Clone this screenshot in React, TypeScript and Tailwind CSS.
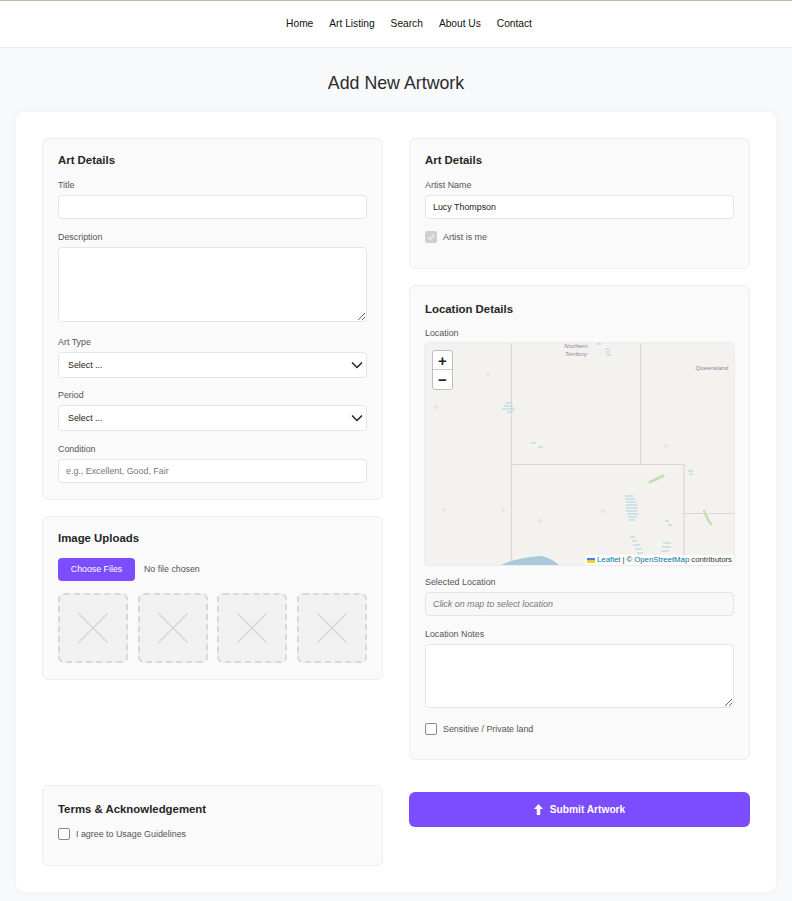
const navLinks = ["Home", "Art Listing", "Search", "About Us", "Contact"];
const panelClass = "rounded-md border border-[#eeeeee] bg-[#fafafa] px-[15px]";
const headingClass = "text-[11.4px] leading-[14px] font-bold text-[#262626]";
const labelClass = "mb-[5px] block text-[8.9px] leading-[10px] text-[#555555]";
const inputClass =
  "block h-6 w-full rounded border border-[#e6e6e6] px-[7px] text-[8.9px] font-medium text-[#222222] outline-none placeholder:font-normal placeholder:text-[#777777]";
const textareaClass = "block w-full rounded border border-[#e6e6e6] bg-white outline-none";

function SelectField({ label, className }: { label: string; className: string }) {
  return (
    <div className={className}>
      <label className={labelClass}>{label}</label>
      <div className="relative">
        <select className="block h-[26px] w-full appearance-none rounded border border-[#e6e6e6] bg-white pt-px pl-[9px] text-[8.9px] font-medium text-[#222222] outline-none">
          <option>Select ...</option>
        </select>
        <svg
          className="absolute top-[9px] right-[4px] h-[8px] w-[12px]"
          viewBox="0 0 12 8"
          fill="none"
          stroke="#222222"
          strokeWidth="1.5"
        >
          <path d="M1 1.5 6 6.5 11 1.5" />
        </svg>
      </div>
    </div>
  );
}

function Checkbox({ label, checked }: { label: string; checked?: boolean }) {
  return (
    <label className="flex items-center gap-[6px] text-[8.9px] leading-3 text-[#555555]">
      {checked ? (
        <span className="flex h-3 w-3 items-center justify-center rounded-[2px] bg-[#cfcfcf]">
          <svg className="h-2 w-2" viewBox="0 0 8 8" fill="none" stroke="#ececec" strokeWidth="1.5">
            <path d="M1 4.2 3.2 6.4 7 1.5" />
          </svg>
        </span>
      ) : (
        <span className="h-3 w-3 rounded-[2px] border border-[#8a8a8a] bg-white" />
      )}
      {label}
    </label>
  );
}

function ImageSlot() {
  return (
    <div className="flex aspect-square items-center justify-center rounded-md border-2 border-dashed border-[#d8d8d8] bg-[#f1f1f1]">
      <svg className="h-[30px] w-[30px]" viewBox="0 0 30 30" stroke="#cfcfcf" strokeWidth="1.1">
        <path d="M0 0 30 30M30 0 0 30" />
      </svg>
    </div>
  );
}

function MapDrawing() {
  return (
    <svg className="block h-full w-full" viewBox="0 0 309 222">
      <g fill="none" stroke="#ddd5d2" strokeWidth="1.2">
        <path d="M86.5 0V222M215.5 0V122M86.5 121.5H259M259 122V222M259 170.5H309" />
      </g>
      <path d="M76 222C88 216 104 214 117 213C124 215 130 218 134 222Z" fill="#a9c8da" />
      <g stroke="#a9d3de" strokeWidth="1">
        <path d="M77 66H90M79 63H88M81 60H86M82 69H88" />
        <path d="M172 1H176M180 6H184M181 9H185M181 12H186" />
        <path d="M200 153H208M200 156H210M201 159H211M201 162H212M201 165H213M201 168H212M202 171H214M203 174H212M204 177H210" />
        <path d="M205 194H210M207 198H213M208 202H215M210 206H217M212 210H218" />
        <path d="M238 200H246M237 204H246M236 208H244" />
        <path d="M263 128H268M264 131H268M240 178H244M243 182H247" />
        <path d="M106 100H111M113 104H118" />
      </g>
      <g stroke="#c3dfb6" strokeWidth="3" strokeLinecap="round" fill="none">
        <path d="M225 139 238 133" />
        <path d="M279 168C281 172 282 176 286 181" strokeWidth="2.5" />
      </g>
      <g fill="#e9e6df">
        <circle cx="63" cy="31" r="2" />
        <circle cx="11" cy="64" r="2" />
        <circle cx="19" cy="167" r="2" />
        <circle cx="78" cy="167" r="2" />
        <circle cx="115" cy="178" r="2" />
        <circle cx="241" cy="103" r="2" />
        <circle cx="178" cy="168" r="2" />
      </g>
      <g fill="#8f7f9d" fontSize="6" fontStyle="italic" textAnchor="middle" fontFamily="Liberation Sans, sans-serif">
        <text x="151" y="5">Northern</text>
        <text x="151" y="13">Territory</text>
        <text x="287" y="27">Queensland</text>
      </g>
    </svg>
  );
}

export default function App() {
  return (
    <div className="min-h-[901px] border-t border-t-[#c9b8a8] bg-[#f8f9fb] font-['Liberation_Sans',Arial,sans-serif]">
      {/* Nav */}
      <nav className="flex h-[47px] items-center justify-center gap-4 border-b border-[#e6e7ea] bg-white pb-px pl-[26px] text-[10.2px] text-[#111111]">
        {navLinks.map((link) => (
          <a key={link} href="#">
            {link}
          </a>
        ))}
      </nav>

      <h1 className="flex h-16 items-center justify-center pt-[6px] text-[17.8px] font-normal text-[#2b2b2b]">
        Add New Artwork
      </h1>

      <main className="mx-4 mb-[10px] grid grid-cols-2 gap-x-[26px] gap-y-[25px] rounded-lg bg-white p-[26px] shadow-[0_0_6px_rgba(0,0,0,0.05)]">
        {/* Left column */}
        <div className="flex flex-col gap-[16px]">
          <section className={`${panelClass} pt-[14px] pb-[16px]`}>
            <h2 className={headingClass}>Art Details</h2>
            <div className="mt-[13px]">
              <label className={labelClass}>Title</label>
              <input className={`${inputClass} bg-white`} />
            </div>
            <div className="mt-[13px]">
              <label className={labelClass}>Description</label>
              <textarea className={`${textareaClass} h-[75px]`} />
            </div>
            <SelectField label="Art Type" className="mt-[15px]" />
            <SelectField label="Period" className="mt-[12px]" />
            <div className="mt-[13px]">
              <label className={labelClass}>Condition</label>
              <input className={`${inputClass} bg-white`} placeholder="e.g., Excellent, Good, Fair" />
            </div>
          </section>

          <section className={`${panelClass} pt-[14px] pb-[16px]`}>
            <h2 className={headingClass}>Image Uploads</h2>
            <input
              type="file"
              multiple
              className="mt-[13px] block h-[23px] w-full text-[8.8px] text-[#555555] file:mr-[9px] file:h-[23px] file:w-[77px] file:cursor-pointer file:rounded file:border-0 file:bg-[#7c4dff] file:text-[8.8px] file:font-medium file:text-white"
            />
            <div className="mt-3 grid grid-cols-4 gap-[9.5px]">
              <ImageSlot />
              <ImageSlot />
              <ImageSlot />
              <ImageSlot />
            </div>
          </section>
        </div>

        {/* Right column */}
        <div className="flex flex-col gap-[16px]">
          <section className={`${panelClass} pt-[14px] pb-[25px]`}>
            <h2 className={headingClass}>Art Details</h2>
            <div className="mt-[13px]">
              <label className={labelClass}>Artist Name</label>
              <input className={`${inputClass} bg-white`} defaultValue="Lucy Thompson" />
            </div>
            <div className="mt-3">
              <Checkbox label="Artist is me" checked />
            </div>
          </section>

          <section className={`${panelClass} pt-[16px] pb-[24px]`}>
            <h2 className={headingClass}>Location Details</h2>
            <div className="mt-[12px]">
              <label className={labelClass}>Location</label>
              <div className="relative h-[222px] overflow-hidden rounded bg-[#f4f2ee] ring-1 ring-[#ececec]">
                <MapDrawing />
                <div className="absolute top-[7px] left-[7px] w-[21px] rounded-[3px] border border-[#bdbdbd] bg-white text-center text-[15px] leading-[19px] font-bold text-[#222222]">
                  <div className="h-[19px] border-b border-[#cccccc]">+</div>
                  <div className="h-[19px]">−</div>
                </div>
                <div className="absolute right-0 bottom-0 flex h-[10px] items-center gap-[2px] bg-white/85 px-[2px] text-[7.8px] text-[#333333]">
                  <svg className="h-[5px] w-[8px]" viewBox="0 0 8 5">
                    <path d="M0 0H8V2.5H0Z" fill="#4c7be1" />
                    <path d="M0 2.5H8V5H0Z" fill="#ffd500" />
                  </svg>
                  <span className="text-[#0078a8]">Leaflet</span>
                  <span>|</span>
                  <span>©</span>
                  <span className="text-[#0078a8]">OpenStreetMap</span>
                  <span>contributors</span>
                </div>
              </div>
            </div>
            <div className="mt-[12px]">
              <label className={labelClass}>Selected Location</label>
              <input
                readOnly
                className={`${inputClass} bg-[#f8f8f8] italic placeholder:italic`}
                placeholder="Click on map to select location"
              />
            </div>
            <div className="mt-[13px]">
              <label className={labelClass}>Location Notes</label>
              <textarea className={`${textareaClass} h-16`} />
            </div>
            <div className="mt-[15px]">
              <Checkbox label="Sensitive / Private land" />
            </div>
          </section>
        </div>

        {/* Bottom row */}
        <section className={`${panelClass} pt-[16px] pb-[25px]`}>
          <h2 className={headingClass}>Terms &amp; Acknowledgement</h2>
          <div className="mt-[12px]">
            <Checkbox label="I agree to Usage Guidelines" />
          </div>
        </section>
        <div>
          <button className="mt-[7px] flex h-[35px] w-full items-center justify-center gap-[7px] rounded-md bg-[#7c4dff] text-[10.2px] font-bold text-white">
            <svg className="h-[11px] w-[9px]" viewBox="0 0 9 11" fill="white">
              <path d="M4.5 0 9 5H6.2V11H2.8V5H0Z" />
            </svg>
            Submit Artwork
          </button>
        </div>
      </main>
    </div>
  );
}
